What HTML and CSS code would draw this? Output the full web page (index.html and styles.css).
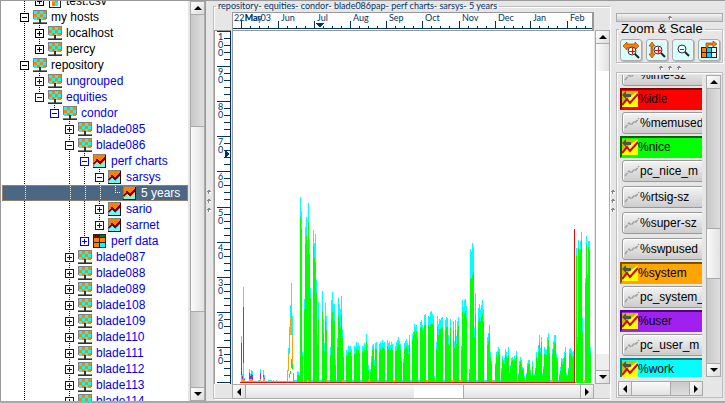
FILE: index.html
```html
<!DOCTYPE html>
<html lang="en">
<head>
<meta charset="utf-8">
<title>sarsys - 5 years</title>
<link rel="stylesheet" href="styles.css">
</head>
<body>
<svg class="defs" aria-hidden="true">
  <symbol id="host" viewBox="0 0 14 14">
    <path fill="#808080" d="M0 0h14v9h-1v1H1V9H0z"/>
    <path fill="#00ffff" d="M1 1h12v9H1z"/>
    <path fill="#ff8000" d="M4 1h3v3H4zM10 1h3v3h-3zM1 4h3v3H1zM7 4h3v3H7zM4 7h3v3H4zM10 7h3v3h-3z"/>
    <path fill="#333" d="M6 9h2v3h6v2H0v-2h6z"/>
    <path fill="#808080" d="M0 12h6v1H0zM8 12h6v1H8z"/>
  </symbol>
  <symbol id="chart" viewBox="0 0 14 14">
    <path fill="#111" d="M0 0h13v14H0z"/>
    <path fill="#808080" d="M0 0h13v1H1v12H0z"/>
    <path fill="#ff8000" d="M1 1h11v12H1z"/>
    <path fill="#60ffff" d="M1 13v-2l3-3 3 3 5-5v7z"/>
    <path fill="none" stroke="#800000" stroke-width="1.500" d="M1 10l3-4 3 3 5-5"/>
  </symbol>
  <symbol id="data" viewBox="0 0 14 14">
    <path fill="#222" d="M0 0h13v14H0z"/>
    <path fill="#800000" d="M1 1h5v2H1z"/><path fill="#008000" d="M7 1h5v2H7z"/>
    <path fill="#ff8000" d="M1 4h5v4H1zM1 9h5v4H1z"/>
    <path fill="#ff8000" d="M7 4h5v4H7z"/><path fill="#00ffff" d="M7 9h5v4H7z"/>
  </symbol>
  <symbol id="file" viewBox="0 0 14 14">
    <path fill="#222" d="M1 0h12v14H1z"/><path fill="#fff" d="M2 1h10v12H2z"/>
    <path fill="#00ffff" d="M4 4h3v4H4zM7 8h3v4H7z"/><path fill="#ff8000" d="M7 4h3v4H7zM4 8h3v4H4z"/>
  </symbol>
  <symbol id="off" viewBox="0 0 16 16">
    <path fill="none" stroke="#a0a0a0" stroke-width="1.500" d="M1 13l4-5 2 2 4-4 1 1 3-4" stroke-dasharray="4 1"/>
  </symbol>
  <symbol id="on" viewBox="0 0 16 16">
    <path fill="#ffff00" d="M0 0h16v16H0z"/><path fill="#c0c000" d="M0 0h16L0 12z"/>
    <path fill="#505050" d="M0 4l4-4v3h5v3H4v2z"/>
    <path fill="none" stroke="#d00000" stroke-width="2" d="M0 14l5-6 3 4 8-9"/>
  </symbol>
  <symbol id="grip" viewBox="0 0 4 4">
    <path fill="#888" d="M1 0h2v1h1v1H2v2H1V2H0V1h1z"/><path fill="#fff" d="M2 2h2v2H2z"/>
  </symbol>
</svg>

<main class="app">
  <section class="tree-pane">
    <nav class="tree" aria-label="Hosts">
      <ul>
        <li class="more"><ul class="first">
          <li class="last"><div class="row"><button class="box" aria-label="Expand"></button><svg><use href="#file"/></svg><span>test.csv</span></div></li>
        </ul></li>
        <li class="more"><div class="row"><button class="box open" aria-label="Collapse"></button><svg><use href="#host"/></svg><span>my hosts</span></div>
          <ul>
            <li><div class="row"><button class="box" aria-label="Expand"></button><svg><use href="#host"/></svg><span>localhost</span></div></li>
            <li class="last"><div class="row"><button class="box" aria-label="Expand"></button><svg><use href="#host"/></svg><span>percy</span></div></li>
          </ul></li>
        <li class="more"><div class="row"><button class="box open" aria-label="Collapse"></button><svg><use href="#host"/></svg><span>repository</span></div>
          <ul class="linked">
            <li><div class="row"><button class="box" aria-label="Expand"></button><svg><use href="#host"/></svg><span>ungrouped</span></div></li>
            <li class="last"><div class="row"><button class="box open" aria-label="Collapse"></button><svg><use href="#host"/></svg><span>equities</span></div>
              <ul>
                <li class="last"><div class="row"><button class="box open" aria-label="Collapse"></button><svg><use href="#host"/></svg><span>condor</span></div>
                  <ul>
                    <li><div class="row"><button class="box" aria-label="Expand"></button><svg><use href="#host"/></svg><span>blade085</span></div></li>
                    <li><div class="row"><button class="box open" aria-label="Collapse"></button><svg><use href="#host"/></svg><span>blade086</span></div>
                      <ul>
                        <li><div class="row"><button class="box open" aria-label="Collapse"></button><svg><use href="#chart"/></svg><span>perf charts</span></div>
                          <ul>
                            <li><div class="row"><button class="box open" aria-label="Collapse"></button><svg><use href="#chart"/></svg><span>sarsys</span></div>
                              <div class="row selected"><svg><use href="#chart"/></svg><span>5 years</span></div></li>
                            <li><div class="row"><button class="box" aria-label="Expand"></button><svg><use href="#chart"/></svg><span>sario</span></div></li>
                            <li class="last"><div class="row"><button class="box" aria-label="Expand"></button><svg><use href="#chart"/></svg><span>sarnet</span></div></li>
                          </ul></li>
                        <li class="last"><div class="row"><button class="box" aria-label="Expand"></button><svg><use href="#data"/></svg><span>perf data</span></div></li>
                      </ul></li>
                    <li><div class="row"><button class="box" aria-label="Expand"></button><svg><use href="#host"/></svg><span>blade087</span></div></li>
                    <li><div class="row"><button class="box" aria-label="Expand"></button><svg><use href="#host"/></svg><span>blade088</span></div></li>
                    <li><div class="row"><button class="box" aria-label="Expand"></button><svg><use href="#host"/></svg><span>blade089</span></div></li>
                    <li><div class="row"><button class="box" aria-label="Expand"></button><svg><use href="#host"/></svg><span>blade108</span></div></li>
                    <li><div class="row"><button class="box" aria-label="Expand"></button><svg><use href="#host"/></svg><span>blade109</span></div></li>
                    <li><div class="row"><button class="box" aria-label="Expand"></button><svg><use href="#host"/></svg><span>blade110</span></div></li>
                    <li><div class="row"><button class="box" aria-label="Expand"></button><svg><use href="#host"/></svg><span>blade111</span></div></li>
                    <li><div class="row"><button class="box" aria-label="Expand"></button><svg><use href="#host"/></svg><span>blade112</span></div></li>
                    <li><div class="row"><button class="box" aria-label="Expand"></button><svg><use href="#host"/></svg><span>blade113</span></div></li>
                    <li><div class="row"><button class="box" aria-label="Expand"></button><svg><use href="#host"/></svg><span>blade114</span></div></li>
                  </ul></li>
              </ul></li>
          </ul></li>
      </ul>
    </nav>
    <div class="bar vertical tree-bar">
      <button class="arrow up" aria-label="Scroll up"></button>
      <div class="track"><div class="thumb"></div></div>
      <button class="arrow down" aria-label="Scroll down"></button>
    </div>
  </section>

  <div class="splitter"><svg><use href="#grip"/></svg><svg><use href="#grip"/></svg><svg><use href="#grip"/></svg></div>

  <section class="chart-pane">
    <fieldset class="chart-box">
      <legend>repository- equities- condor- blade086pap- perf charts- sarsys- 5 years</legend>
      <div class="chart-grid">
        <svg class="ruler-x" id="ruler-x"></svg>
        <svg class="ruler-y" id="ruler-y"></svg>
        <svg class="plot" id="plot" role="img" aria-label="sarsys usage over time"></svg>
        <div class="bar vertical chart-v">
          <button class="arrow up" aria-label="Scroll up"></button>
          <div class="track"><div class="thumb"></div><div class="view"></div></div>
          <button class="arrow down" aria-label="Scroll down"></button>
        </div>
        <div class="bar horizontal chart-h">
          <button class="arrow left" aria-label="Scroll left"></button>
          <div class="track"><div class="thumb"></div><div class="view"></div><div class="thumb end"></div></div>
          <button class="arrow right" aria-label="Scroll right"></button>
        </div>
      </div>
    </fieldset>
  </section>

  <div class="splitter plain"><svg><use href="#grip"/></svg><svg><use href="#grip"/></svg><svg><use href="#grip"/></svg></div>

  <aside class="side">
    <div class="handle"><svg><use href="#grip"/></svg></div>
    <fieldset class="zoom-box">
      <legend>Zoom &amp; Scale</legend>
      <div class="tools">
        <button aria-label="Zoom horizontally"><svg viewBox="0 0 18 18"><path fill="#d8ffff" d="M0 0h18v18H0z"/><path fill="#ff8000" stroke="#803000" stroke-width=".6" d="M1 5l4-4v2h8V1l4 4-4 4V7H5v2z"/><circle cx="10" cy="10" r="4" fill="#fff" stroke="#333"/><path stroke="#f00" d="M7 10.500h6M10.500 7v6"/><path stroke="#222" stroke-width="2" d="M13 13l4 4"/></svg></button>
        <button aria-label="Zoom vertically"><svg viewBox="0 0 18 18"><path fill="#d8ffff" d="M0 0h18v18H0z"/><path fill="#ff8000" stroke="#803000" stroke-width=".6" d="M4 1l3 4H5v8h2l-3 4-3-4h2V5H1z"/><circle cx="10" cy="9" r="4" fill="#fff" stroke="#333"/><path stroke="#f00" d="M7 9.500h6M10.500 6v6"/><path stroke="#222" stroke-width="2" d="M13 12l4 4"/></svg></button>
        <button aria-label="Zoom out"><svg viewBox="0 0 18 18"><path fill="#d8ffff" d="M0 0h18v18H0z"/><circle cx="8" cy="8" r="4" fill="#e8ffff" stroke="#333"/><path stroke="#f00" d="M6 8.500h4"/><path stroke="#222" stroke-width="2" d="M11 11l4 4"/></svg></button>
        <button aria-label="Scale"><svg viewBox="0 0 18 18"><path fill="#d8ffff" d="M0 0h18v18H0z"/><path fill="#222" d="M1 6h16v11H1z"/><path fill="#ff8000" d="M2 7h4v4H2zM2 12h4v4H2z"/><path fill="#00d0ff" d="M7 7h4v4H7zM7 12h4v4H7z"/><path fill="#d8ffff" d="M12 7h4v4h-4zM12 12h4v4h-4z"/><path fill="#ff8000" stroke="#803000" stroke-width=".6" d="M6 2h7V0l4 3-4 3V4H8v3H6z"/></svg></button>
      </div>
    </fieldset>
    <div class="grips"><svg><use href="#grip"/></svg><svg><use href="#grip"/></svg><svg><use href="#grip"/></svg></div>
    <div class="metrics-box">
      <div class="metrics">
        <button class="metric"><svg><use href="#off"/></svg>%ime-sz</button>
        <button class="metric on idle" aria-pressed="true"><svg><use href="#on"/></svg>%idle</button>
        <button class="metric"><svg><use href="#off"/></svg>%memused</button>
        <button class="metric on nice" aria-pressed="true"><svg><use href="#on"/></svg>%nice</button>
        <button class="metric"><svg><use href="#off"/></svg>pc_nice_m</button>
        <button class="metric"><svg><use href="#off"/></svg>%rtsig-sz</button>
        <button class="metric"><svg><use href="#off"/></svg>%super-sz</button>
        <button class="metric"><svg><use href="#off"/></svg>%swpused</button>
        <button class="metric on system" aria-pressed="true"><svg><use href="#on"/></svg>%system</button>
        <button class="metric"><svg><use href="#off"/></svg>pc_system_</button>
        <button class="metric on user" aria-pressed="true"><svg><use href="#on"/></svg>%user</button>
        <button class="metric"><svg><use href="#off"/></svg>pc_user_m</button>
        <button class="metric on work" aria-pressed="true"><svg><use href="#on"/></svg>%work</button>
      </div>
      <div class="bar vertical metrics-v">
        <button class="arrow up" aria-label="Scroll up"></button>
        <div class="track"><div class="thumb"></div></div>
        <button class="arrow down" aria-label="Scroll down"></button>
      </div>
      <div class="bar horizontal metrics-h">
        <button class="arrow left" aria-label="Scroll left"></button>
        <div class="track"><div class="thumb"></div></div>
        <button class="arrow right" aria-label="Scroll right"></button>
      </div>
    </div>
  </aside>
</main>
<script src="chart.js"></script>
</body>
</html>
```
FILE: styles.css
```css
* { box-sizing: border-box; }
body {
  margin: 0;
  background: #e6e6e6;
  color: #000;
  font: 12px/16px "Liberation Sans", Arial, sans-serif;
}
ul { margin: 0; padding: 0; list-style: none; }
button { margin: 0; padding: 0; font: inherit; color: inherit; border: 0; background: none; }
fieldset { margin: 0; padding: 0; min-width: 0; border: 1px solid #bdbdbd; box-shadow: inset 1px 1px #fff, 1px 1px #fff; }
legend { padding: 0 2px; }
.defs { display: none; }

.app {
  display: flex;
  height: 100vh;
  border-top: 1px solid #999;
  border-bottom: 2px solid #a8a8a8;
  overflow: hidden;
}

/* Host tree */
.tree-pane { display: flex; flex: 0 0 206px; border-left: 1px solid #999; border-right: 1px solid #999; }
.tree { flex: 1; overflow: hidden; background: #fff; border-right: 2px solid #e6e6e6; }
.tree > ul { margin: -8px 3px 0 0; padding-left: 19px; white-space: nowrap; }
.tree ul ul { padding-left: 15px; }
.tree li { position: relative; }
.tree li::before {
  content: "";
  position: absolute;
  left: 4px;
  top: 0;
  bottom: 0;
  width: 1px;
  background: repeating-linear-gradient(#000 0 1px, transparent 1px 2px);
}
.tree li.last::before { bottom: auto; height: 8px; }
.row { position: relative; z-index: 1; display: flex; align-items: center; height: 16px; }
.row svg { flex: none; width: 14px; height: 14px; margin: 0 4px 0 4px; shape-rendering: crispEdges; }
.linked { color: #0000ee; }
.box {
  flex: none;
  width: 9px;
  height: 9px;
  border: 1px solid currentColor;
  background: linear-gradient(currentColor, currentColor) center / 5px 1px no-repeat, linear-gradient(currentColor, currentColor) center / 1px 5px no-repeat, #fff;
}
.box.open { background: linear-gradient(currentColor, currentColor) center / 5px 1px no-repeat, #fff; }
.row.selected {
  margin: 0 -3px 0 -93px;
  padding-left: 116px;
  color: #fff;
  border: 1px solid #9a7b66;
  background:
    repeating-linear-gradient(#fff 0 1px, transparent 1px 2px) 22px 0 / 1px 100% no-repeat,
    repeating-linear-gradient(#fff 0 1px, transparent 1px 2px) 67px 0 / 1px 100% no-repeat,
    repeating-linear-gradient(#fff 0 1px, transparent 1px 2px) 82px 0 / 1px 100% no-repeat,
    repeating-linear-gradient(#fff 0 1px, transparent 1px 2px) 97px 0 / 1px 100% no-repeat,
    repeating-linear-gradient(#fff 0 1px, transparent 1px 2px) 112px 0 / 1px 7px no-repeat,
    repeating-linear-gradient(90deg, #fff 0 1px, transparent 1px 2px) 112px 6px / 6px 1px no-repeat,
    #4a6884;
}

/* Scroll bars */
.bar { display: flex; background: #d4d4d4; border: 1px solid #aaa; }
.bar.vertical { flex-direction: column; width: 15px; }
.bar.horizontal { height: 15px; }
.track { flex: 1; display: flex; flex-direction: inherit; min-width: 0; min-height: 0; background: linear-gradient(90deg, #c8c8c8, #dedede); }
.horizontal .track { background: linear-gradient(#c8c8c8, #dedede); }
.thumb { background: linear-gradient(90deg, #fafafa, #e2e2e2); border: 0 solid #aaa; }
.horizontal .thumb { background: linear-gradient(#fafafa, #e2e2e2); }
.arrow { display: grid; place-items: center; flex: none; width: 13px; height: 13px; background: linear-gradient(135deg, #fff, #dcdcdc); }
.arrow::before { content: ""; border: 4px solid transparent; }
.up { border-bottom: 1px solid #aaa; }
.down { border-top: 1px solid #aaa; }
.left { border-right: 1px solid #aaa; }
.right { border-left: 1px solid #aaa; }
.up::before { border-top: 0; border-bottom-color: #000; }
.down::before { border-bottom: 0; border-top-color: #000; }
.left::before { border-left: 0; border-right-color: #000; }
.right::before { border-right: 0; border-left-color: #000; }
.tree-bar .thumb { margin-top: 111px; height: 186px; border-width: 1px 0; }

/* Splitters */
.splitter { display: flex; flex-direction: column; justify-content: center; gap: 5px; flex: 0 0 7px; padding-left: 1px; }
.splitter.plain { flex-basis: 6px; }
.splitter svg, .handle svg, .grips svg { width: 4px; height: 4px; }

/* Chart */
.chart-pane { flex: 1; min-width: 0; color: #003366; font: 9px/10px Lato, "Liberation Sans", sans-serif; }
.chart-box { height: 398px; border-right: 0; }
.chart-box legend { margin-left: 2px; white-space: nowrap; }
.chart-grid {
  display: grid;
  grid-template: 18px 354px 15px / 17px 1fr 15px;
  grid-template-areas: ". rx ." "ry plot v" ". h .";
  column-gap: 1px;
  padding-top: 1px;
}
.ruler-x { grid-area: rx; width: 100%; height: 18px; background: #fff; border: 1px solid #999; border-width: 1px 2px 0 1px; }
.ruler-y { grid-area: ry; width: 17px; height: 100%; background: #fff; border-left: 1px solid #999; border-top: 1px solid #999; }
.plot { grid-area: plot; width: 100%; height: 100%; background: #fff; border-left: 1px solid #999; border-top: 1px solid #999; }
.ruler-x, .ruler-y, .plot { display: block; shape-rendering: crispEdges; overflow: hidden; fill: #003366; }
.chart-v { grid-area: v; }
.chart-h { grid-area: h; }
.chart-v .view, .chart-h .view { flex: 1; background: #fff; }
.chart-v .thumb { height: 27px; }
.chart-v .view { margin-bottom: 16px; flex: 1; }
.chart-v .track, .chart-h .track { background: #eee; }
.chart-h .thumb { flex: 0 1 168px; }
.chart-h .view { flex: 0 1 50px; border-right: 1px solid #aaa; }
.chart-h .thumb.end { flex: 1; }

/* Side panel */
.side { display: flex; flex-direction: column; flex: 0 0 109px; padding: 12px 2px 3px 0; }
.handle { display: grid; place-items: center; height: 9px; border: 1px solid #aaa; background: linear-gradient(#f4f4f4, #ccc); }
.zoom-box { height: 42px; margin-top: -1px; font-size: 13px; }
.zoom-box legend { margin-left: 2px; }
.tools { display: flex; gap: 4px; padding: 2px 0 0 3px; }
.tools button {
  flex: none;
  width: 22px;
  height: 22px;
  padding: 1px;
  border: 1px solid #aaa;
  border-radius: 3px;
  background: #f2f2f2;
  box-shadow: 1px 1px #bbb;
}
.tools svg { display: block; width: 18px; height: 18px; }
.grips { display: flex; justify-content: center; align-items: center; gap: 5px; height: 9px; }
.metrics-box {
  flex: 1;
  min-height: 0;
  display: grid;
  grid-template: minmax(0, 1fr) 15px / minmax(0, 1fr) 15px;
  gap: 4px;
  padding: 2px 1px 1px;
  border: 1px solid #bdbdbd;
  box-shadow: inset 1px 1px #fff;
}
.metrics { display: flex; flex-direction: column; overflow: hidden; margin-left: 2px; white-space: nowrap; }
.metric {
  flex: none;
  display: flex;
  align-items: center;
  width: 120px;
  height: 22px;
  margin: 2px;
  padding-left: 1px;
  border: 1px solid #999;
  border-radius: 3px;
  background: linear-gradient(#f4f4f4, #ccc);
  box-shadow: inset 1px 1px #fff;
}
.metric:first-child { margin-top: -11px; }
.metric svg { flex: none; width: 16px; height: 16px; }
.metric.on { margin: 0; border-width: 2px; border-radius: 0; padding: 0; box-shadow: none; }
.metric.idle { background: #ff0000; border-color: #800000 #ff0000 #ff0000 #800000; }
.metric.nice { background: #00ff00; border-color: #006000 #00ff00 #00ff00 #006000; }
.metric.system { background: #ffa500; border-color: #805000 #ffa500 #ffa500 #805000; }
.metric.user { background: #a020f0; border-color: #500080 #a020f0 #a020f0 #500080; }
.metric.work { background: #00ffff; border-color: #008080 #00ffff #00ffff #008080; }
.metrics-v .thumb { margin-top: 139px; height: 51px; border-width: 1px 0; }
.metrics-h { margin-right: -1px; }
.metrics-h .thumb { width: 68%; border-width: 0 1px 0 0; }
```
FILE: chart.js
```js
const NS = "http://www.w3.org/2000/svg";

function rect(svg, x, y, w, h, fill) {
  const r = document.createElementNS(NS, "rect");
  r.setAttribute("x", x);
  r.setAttribute("y", y);
  r.setAttribute("width", w);
  r.setAttribute("height", h);
  if (fill) r.setAttribute("fill", fill);
  svg.append(r);
}

function label(svg, x, y, text) {
  const t = document.createElementNS(NS, "text");
  t.setAttribute("x", x);
  t.setAttribute("y", y);
  t.textContent = text;
  svg.append(t);
}

// Month ruler
const rulerX = document.getElementById("ruler-x");
const months = [
  [8, "22Mar03"], [45, "Jun"], [81, "Jul"], [117, "Aug"], [153, "Sep"],
  [189, "Oct"], [226, "Nov"], [262, "Dec"], [297, "Jan"], [334, "Feb"]
];
months.forEach(([x, name], i) => {
  rect(rulerX, x, 8, 1, 8);
  for (let k = 1; k < 4; k++) if (x + k * 9 < 358) rect(rulerX, x + k * 9, 13, 1, 3);
  label(rulerX, i ? x + 3 : 1, 8, name);
});
label(rulerX, 12, 8, "May");
rect(rulerX, 0, 15, 1000, 1);
const marker = document.createElementNS(NS, "path");
marker.setAttribute("d", "M83 10h8l-4 5z");
rulerX.append(marker);

// Value ruler
const rulerY = document.getElementById("ruler-y");
for (let i = 0; i <= 10; i++) {
  const y = Math.round(i * 35.1);
  rect(rulerY, 2, y, 14, 1);
  if (i === 10) break;
  for (let k = 1; k < 5; k++) rect(rulerY, 9, y + k * 7, 6, 1);
  String(100 - i * 10).split("").forEach((d, n) => label(rulerY, 3, y + 9 + n * 8, d));
}
rect(rulerY, 15, 0, 1, 400);
const pointer = document.createElementNS(NS, "path");
pointer.setAttribute("d", "M10 119l5 4-5 4z");
rulerY.append(pointer);

// Each run: first column, then pairs of (total, nice) tops, one pair per column
const runs = [
  [293, 373, 375], [297, 371, 375, 372, 375, 374, 376, 197, 217, 211, 229, 352, 356],
  [304, 299, 309, 227, 244, 217, 236, 240, 255, 203, 222, 239, 254, 288, 298],
  [313, 230, 246, 243, 258, 234, 262, 280, 293, 335, 345, 302, 319],
  [322, 291, 311, 319, 333, 343, 351, 303, 321, 316, 330],
  [330, 347, 355, 300, 319, 292, 312, 304, 321, 304, 321, 359, 365],
  [337, 338, 348, 298, 316, 304, 321, 309, 327, 296, 315, 329, 338, 351, 357],
  [346, 350, 355, 351, 356, 346, 352, 347, 353, 346, 352, 349, 356],
  [354, 346, 354, 347, 354, 342, 349, 346, 353, 343, 350, 346, 353],
  [362, 346, 352, 347, 353, 343, 350, 345, 352, 334, 342, 344, 351, 365, 370],
  [370, 369, 372, 356, 362, 345, 350, 344, 349, 360, 366, 343, 349, 342, 349],
  [379, 344, 353, 342, 349, 343, 350, 340, 347, 343, 348, 342, 349],
  [387, 340, 346, 343, 349, 341, 347, 345, 350, 342, 348, 344, 350],
  [395, 346, 351, 342, 350, 340, 348, 337, 344, 341, 347, 344, 350, 357, 361],
  [403, 359, 363, 343, 349, 341, 348, 339, 346, 343, 349, 345, 354, 335, 343],
  [412, 334, 340, 332, 336, 324, 331, 327, 334, 325, 332, 331, 338],
  [420, 322, 328, 320, 327, 325, 330, 328, 335, 315, 325, 314, 325],
  [428, 316, 325, 317, 327, 312, 325, 311, 324, 314, 324, 316, 325, 376, 378],
  [436, 342, 350, 316, 327, 324, 335, 319, 329, 320, 329, 318, 328, 317, 327],
  [445, 320, 330, 317, 327, 318, 327, 335, 344, 345, 352, 319, 328],
  [453, 321, 330, 341, 348, 320, 330, 336, 344, 321, 330, 317, 326],
  [461, 346, 350, 300, 312, 307, 319, 300, 313, 299, 311, 306, 318],
  [469, 369, 373, 249, 279, 252, 278, 243, 275, 247, 272, 328, 337, 293, 314],
  [478, 308, 321, 304, 318, 310, 321, 305, 317, 300, 314, 309, 322],
  [487, 337, 345, 333, 341, 325, 334, 352, 357, 361, 364],
  [495, 363, 365, 352, 355, 351, 359, 347, 352, 349, 355],
  [501, 368, 372, 356, 359, 360, 363, 358, 364, 349, 355, 352, 357, 356, 358, 347, 355, 373, 374, 365, 367, 358, 362, 357, 360, 359, 362, 356, 360, 358, 361, 351, 355],
  [518, 373, 375, 361, 365, 357, 361, 360, 364, 367, 369, 368, 370, 376, 378],
  [526, 373, 375, 363, 366, 360, 364, 360, 364, 370, 372, 375, 376, 361, 366, 375, 376, 374, 376, 368, 370, 352, 357, 358, 361, 345, 352, 335, 343, 348, 353, 337, 342, 373, 375, 366, 369, 347, 354, 349, 354, 350, 355, 337, 346, 333, 340, 347, 353],
  [552, 349, 354, 341, 349, 335, 343, 335, 343, 354, 358, 357, 361],
  [559, 374, 376, 367, 371, 358, 362, 359, 364, 358, 362, 352, 357, 347, 353, 373, 375, 375, 376, 368, 370, 349, 354, 348, 353, 350, 356, 352, 357, 351, 356],
  [576, 248, 256, 337, 344, 240, 248, 249, 256, 241, 250, 232, 240, 318, 332],
  [585, 278, 283, 236, 245, 274, 279, 241, 247, 241, 250, 347, 353]
];

const plot = document.getElementById("plot");
const LEFT = 233, TOP = 31, BASE = 382;

function column(x, top, bottom, fill, width = 1) {
  rect(plot, x - LEFT, top - TOP, width, bottom - top, fill);
}

column(293, 380, BASE, "#00ffff", 282);
column(241, 381, BASE, "#ffa500", 332);
for (const [start, ...tops] of runs) {
  for (let i = 0; i < tops.length; i += 2) {
    column(start + i / 2, tops[i], BASE, "#00ffff");
    column(start + i / 2, tops[i + 1], BASE, "#00ff00");
  }
}

// Early samples: total, user, system tops
for (const [x, total, user, system] of [
  [241, 336, 343, 375], [242, 374, 376, 379], [243, 287, 307, 363], [244, 378, 379, 380],
  [249, 369, 373, 379], [250, 374, 376, 379], [251, 370, 374, 379], [252, 371, 375, 380],
  [260, 369, 373, 379], [263, 370, 375, 377], [264, 375, 378, 379]
]) {
  column(x, total, user, "#00ffff");
  column(x, user, system, "#a020f0");
  column(x, system, BASE, "#ffa500");
}
for (const [x, w] of [[258, 2], [268, 4], [273, 1], [276, 1]]) column(x, 380, 381, "#00ffff", w);

// Spike before July: column, total top, system top, system bottom
for (const [x, total, system, bottom] of [
  [287, 370, 370, 382], [288, 348, 354, 371], [289, 327, 335, 354],
  [290, 305, 317, 335], [291, 283, 307, 335], [292, 316, 335, 365]
]) {
  column(x, total, system, "#00ffff");
  column(x, system, bottom, "#ffa500");
}
for (const [x, y, h] of [[289, 374, 4], [290, 371, 3], [291, 359, 9], [292, 364, 5], [293, 374, 7]]) column(x, y, y + h, "#00ff00");
for (const x of [307, 326, 342, 368, 393, 426, 452, 460, 492, 551, 584]) column(x, 380, BASE, "#ffa500", 2);

column(240, 382, 383, "#ff0000", 335);
column(574, 229, 383, "#ff0000");
column(575, 382, 383, "#00ff00", 16);
```
